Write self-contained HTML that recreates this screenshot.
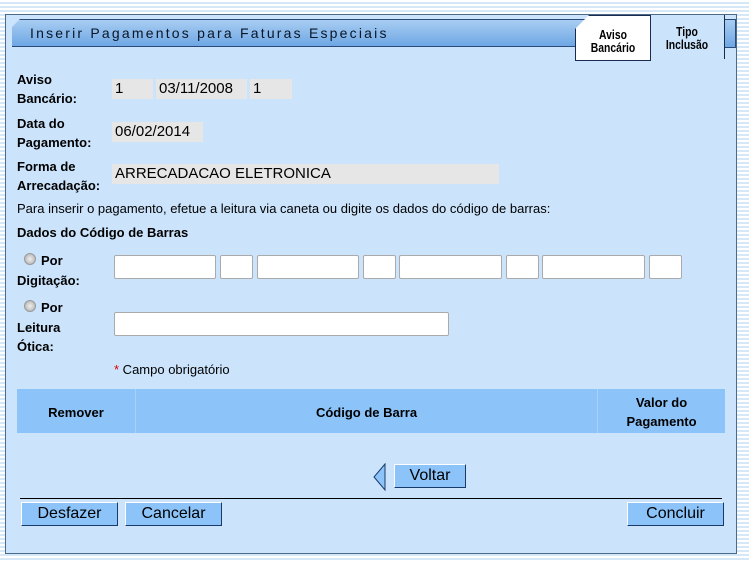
<!DOCTYPE html>
<html><head><meta charset="utf-8"><style>
body{margin:0;width:749px;height:562px;overflow:hidden;background:repeating-linear-gradient(#fff 0,#fff 2px,#d6e8f8 2px,#d6e8f8 4px);font-family:"Liberation Sans",sans-serif;position:relative}
.panel{position:absolute;left:5px;top:14px;width:730px;height:538px;background:#cbe4fc;border:1px solid #4a6a8a}
.hdr{position:absolute;left:12px;top:19px;width:600px;height:26px;background:linear-gradient(#a8cdf2,#6ea7e4);border:1px solid #2a4a7a;border-left:none;clip-path:polygon(8px 0,100% 0,100% 100%,0 100%,0 8px)}
.hdr span{position:absolute;left:18px;top:5px;font-size:14px;letter-spacing:2.2px;color:#0a1628}
.tab{position:absolute;font-family:"Liberation Sans",sans-serif;font-weight:bold;font-size:13px;line-height:13px;text-align:center;color:#000}
.tab div{transform:scaleX(0.8)}
.t1{left:575px;top:15px;width:74px;height:44px;background:#fff;border:1px solid #1a2a50;clip-path:polygon(14px 0,100% 0,100% 100%,0 100%,0 14px)}
.t2{left:650px;top:15px;width:74px;height:44px;background:#cbe4fc;border-right:1px solid #1a2a50}
.lbl{position:absolute;left:17px;font-size:13px;font-weight:bold;line-height:19px}
.val{position:absolute;background:#e6e6e6;font-size:15px;height:20px;line-height:20px;padding-left:3px}
.in{position:absolute;background:#fff;border:1px solid #aaa;height:22px;top:255px;border-radius:2px}
.txt{position:absolute;font-size:13px}
.btn{position:absolute;background:#8cc4fa;border:1px solid #1a3a6a;border-top-color:#fff;border-left-color:#fff;font-size:16px;text-align:center;height:22px;line-height:22px}
.rad{display:inline-block;width:10px;height:10px;border-radius:50%;background:radial-gradient(#eee,#aaa);border:1px solid #999;margin-right:5px;vertical-align:0}
</style></head><body>
<div class="panel"></div>
<div class="hdr"><span>Inserir Pagamentos para Faturas Especiais</span></div>
<div style="position:absolute;left:612px;top:19px;width:123px;height:27px;background:linear-gradient(#a8cdf2,#6ea7e4);border-top:1px solid #2a4a7a;border-bottom:1px solid #2a4a7a;border-right:1px solid #2a4a7a"></div>
<div class="tab t2"><div style="padding-top:10px">Tipo<br>Inclusão</div></div>
<div class="tab t1"><div style="padding-top:12px">Aviso<br>Bancário</div></div>

<div class="lbl" style="top:70px">Aviso<br>Bancário:</div>
<div class="val" style="left:112px;top:79px;width:38px">1</div>
<div class="val" style="left:156px;top:79px;width:88px">03/11/2008</div>
<div class="val" style="left:250px;top:79px;width:39px">1</div>
<div class="lbl" style="top:114px">Data do<br>Pagamento:</div>
<div class="val" style="left:112px;top:122px;width:88px">06/02/2014</div>
<div class="lbl" style="top:157px">Forma de<br>Arrecadação:</div>
<div class="val" style="left:112px;top:164px;width:384px">ARRECADACAO ELETRONICA</div>
<div class="txt" style="left:17px;top:201px">Para inserir o pagamento, efetue a leitura via caneta ou digite os dados do código de barras:</div>
<div class="lbl" style="top:223px">Dados do Código de Barras</div>
<div class="lbl" style="top:251px;left:24px"><span class="rad"></span>Por</div>
<div class="lbl" style="top:271px">Digitação:</div>
<div class="in" style="left:114px;width:100px"></div>
<div class="in" style="left:220px;width:31px"></div>
<div class="in" style="left:257px;width:100px"></div>
<div class="in" style="left:363px;width:31px"></div>
<div class="in" style="left:399px;width:101px"></div>
<div class="in" style="left:506px;width:31px"></div>
<div class="in" style="left:542px;width:101px"></div>
<div class="in" style="left:649px;width:31px"></div>
<div class="lbl" style="top:298px;left:24px"><span class="rad"></span>Por</div>
<div class="lbl" style="top:318px">Leitura<br>Ótica:</div>
<div class="in" style="left:114px;top:312px;width:333px"></div>
<div class="txt" style="left:114px;top:362px"><span style="color:#d00">*</span> Campo obrigatório</div>

<div style="position:absolute;left:17px;top:389px;width:708px;height:44px;background:#8cc4fa"></div>
<div style="position:absolute;left:135px;top:389px;width:1px;height:44px;background:#a8d2fc"></div>
<div style="position:absolute;left:597px;top:389px;width:1px;height:44px;background:#a8d2fc"></div>
<div class="lbl" style="left:17px;width:118px;top:403px;text-align:center">Remover</div>
<div class="lbl" style="left:136px;width:461px;top:403px;text-align:center">Código de Barra</div>
<div class="lbl" style="left:598px;width:127px;top:393px;text-align:center">Valor do<br>Pagamento</div>

<svg style="position:absolute;left:372px;top:463px" width="16" height="28"><path d="M13 1 L2 14 L13 27 Z" fill="#8cc4fa" stroke="#1a3a6a" stroke-width="1"/></svg>
<div class="btn" style="left:394px;top:464px;width:70px">Voltar</div>
<div style="position:absolute;left:20px;top:498px;width:702px;height:1px;background:#000"></div>
<div class="btn" style="left:21px;top:502px;width:95px">Desfazer</div>
<div class="btn" style="left:125px;top:502px;width:95px">Cancelar</div>
<div class="btn" style="left:627px;top:502px;width:95px">Concluir</div>
</body></html>
